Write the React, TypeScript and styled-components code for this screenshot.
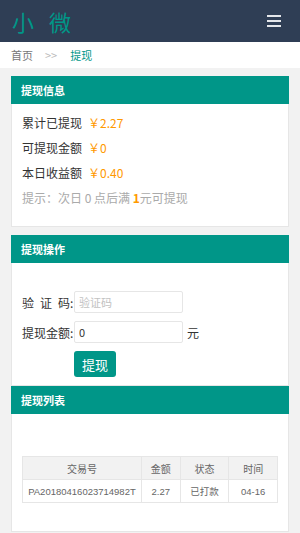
import styled, { createGlobalStyle } from "styled-components";

const GlobalStyle = createGlobalStyle`
  html, body {
    margin: 0;
    padding: 0;
    background: #f2f2f2;
    font-family: "Noto Sans CJK SC", "Noto Sans", "Liberation Sans", sans-serif;
    color: #333;
  }
  * { box-sizing: border-box; }
`;

const Header = styled.header`
  height: 42px;
  background: #2f3e55;
  display: flex;
  align-items: center;
  justify-content: space-between;
  padding: 0 19px 0 12px;
`;

const Logo = styled.h1`
  margin: 0;
  font-size: 22px;
  font-weight: 400;
  letter-spacing: 5px;
  color: #009688;
  line-height: 42px;
`;

const Burger = styled.div`
  display: flex;
  flex-direction: column;
  gap: 3px;
  width: 14px;
  span {
    display: block;
    height: 2px;
    background: #e4e6ea;
  }
`;

const Crumbs = styled.nav`
  height: 26px;
  background: #fff;
  padding-left: 11px;
  font-size: 11px;
  line-height: 26px;
  color: #777;
`;

const Sep = styled.span`
  color: #bbb;
  margin: 0 13px 0 12px;
`;

const Current = styled.span`
  color: #009688;
`;

const Content = styled.main`
  padding: 8px 11px 0;
`;

const Card = styled.section<{ gap?: number }>`
  background: #fff;
  border: 1px solid #e6e6e6;
  margin-bottom: ${(p) => p.gap ?? 8}px;
`;

const CardHead = styled.div`
  height: 28px;
  line-height: 28px;
  background: #009688;
  color: #fff;
  font-size: 11px;
  font-weight: 700;
  padding: 0 10px;
  margin: -1px -1px 0;
`;

const InfoBody = styled.div`
  padding: 6px 10px 16px;
`;

const Line = styled.div<{ muted?: boolean }>`
  line-height: 25px;
  font-size: 12px;
  color: ${(p) => (p.muted ? "#aaa" : "#333")};
`;

const Money = styled.span<{ bold?: boolean }>`
  color: #ff9900;
  margin-left: ${(p) => (p.bold ? 0 : 6)}px;
  font-weight: ${(p) => (p.bold ? 700 : 400)};
`;

const FormBody = styled.div`
  padding: 28px 10px 8px;
  display: flex;
  flex-direction: column;
  gap: 8px;
`;

const Row = styled.div`
  display: flex;
  align-items: center;
  font-size: 12px;
  color: #333;
`;

const Label = styled.label`
  width: 52px;
  white-space: nowrap;
`;

const Spread = styled.span`
  letter-spacing: 6px;
`;

const Input = styled.input`
  width: 109px;
  height: 22px;
  border: 1px solid #e6e6e6;
  border-radius: 2px;
  padding: 0 4px;
  font-size: 11px;
  font-family: inherit;
  color: #333;
  outline: none;
  &::placeholder {
    color: #c2c2c2;
  }
`;

const Unit = styled.span`
  margin-left: 4px;
`;

const Button = styled.button`
  margin-left: 52px;
  width: 42px;
  height: 26px;
  border: none;
  border-radius: 3px;
  background: #009688;
  color: #fff;
  font-family: inherit;
  font-size: 13px;
  padding: 0;
`;

const ListBody = styled.div`
  padding: 42px 10px 28px;
`;

const Table = styled.table`
  width: 100%;
  border-collapse: collapse;
  font-family: "Liberation Sans", "Noto Sans CJK SC", sans-serif;
  font-size: 10px;
  color: #666;
  th, td {
    border: 1px solid #e6e6e6;
    height: 23px;
    padding: 0;
    text-align: center;
    font-weight: 400;
  }
  td {
    font-size: 9.5px;
  }
  th {
    background: #f2f2f2;
  }
`;

const rows = [
  { no: "PA20180416023714982T", amount: "2.27", status: "已打款", time: "04-16" },
];

export default function App() {
  return (
    <>
      <GlobalStyle />
      <Header>
        <Logo>小 微</Logo>
        <Burger>
          <span />
          <span />
          <span />
        </Burger>
      </Header>
      <Crumbs>
        首页<Sep>&gt;&gt;</Sep>
        <Current>提现</Current>
      </Crumbs>
      <Content>
        <Card>
          <CardHead>提现信息</CardHead>
          <InfoBody>
            <Line>
              累计已提现<Money>￥2.27</Money>
            </Line>
            <Line>
              可提现金额<Money>￥0</Money>
            </Line>
            <Line>
              本日收益额<Money>￥0.40</Money>
            </Line>
            <Line muted>
              提示：次日 0 点后满 <Money bold>1</Money>元可提现
            </Line>
          </InfoBody>
        </Card>
        <Card gap={0}>
          <CardHead>提现操作</CardHead>
          <FormBody>
            <Row>
              <Label>
                <Spread>验证</Spread>码:
              </Label>
              <Input placeholder="验证码" />
            </Row>
            <Row>
              <Label>提现金额:</Label>
              <Input defaultValue="0" />
              <Unit>元</Unit>
            </Row>
            <Row>
              <Button>提现</Button>
            </Row>
          </FormBody>
        </Card>
        <Card gap={0}>
          <CardHead>提现列表</CardHead>
          <ListBody>
            <Table>
              <colgroup>
                <col style={{ width: 119 }} />
                <col style={{ width: 39 }} />
                <col style={{ width: 49 }} />
                <col style={{ width: 49 }} />
              </colgroup>
              <thead>
                <tr>
                  <th>交易号</th>
                  <th>金额</th>
                  <th>状态</th>
                  <th>时间</th>
                </tr>
              </thead>
              <tbody>
                {rows.map((r) => (
                  <tr key={r.no}>
                    <td>{r.no}</td>
                    <td>{r.amount}</td>
                    <td>{r.status}</td>
                    <td>{r.time}</td>
                  </tr>
                ))}
              </tbody>
            </Table>
          </ListBody>
        </Card>
      </Content>
    </>
  );
}
